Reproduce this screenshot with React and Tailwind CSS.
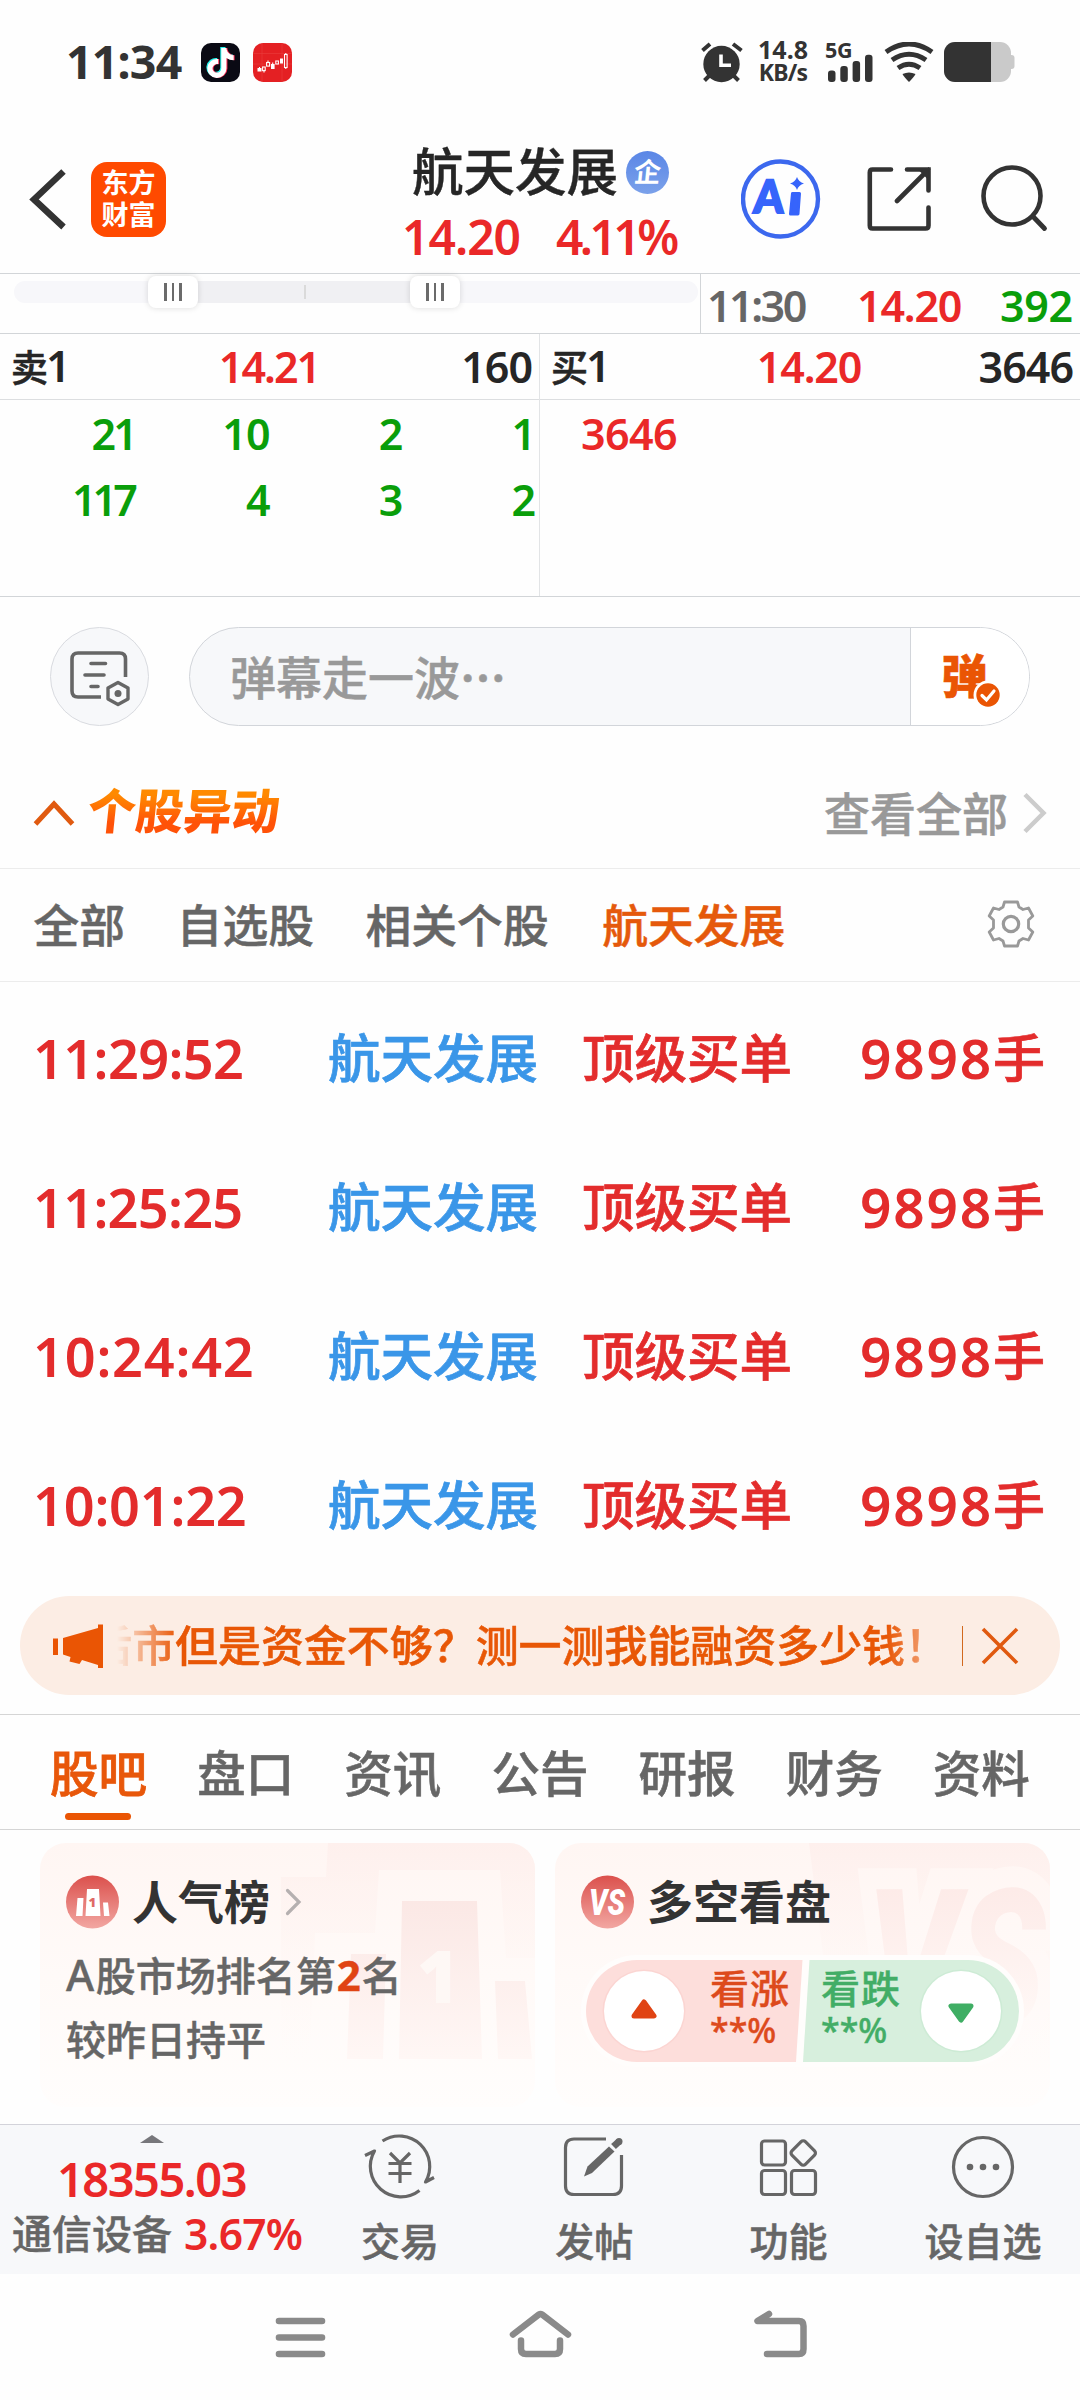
import React from "react";
import { FaTiktok } from "react-icons/fa6";

function StatusBar() {
  return (
    <div className="flex h-[124px] items-center text-[#333]">
      <div className="ml-[66px] -mt-[3px] w-[135px] text-[46.500px] leading-[48px] font-bold tracking-[-0.800px]">11:34</div>
      <div className="relative h-[39px] w-[39px] rounded-[10px] bg-[#0a0a14]">
        <FaTiktok className="absolute left-[5px] top-[4.500px] h-[30px] w-[27px] text-[#25f4ee]" />
        <FaTiktok className="absolute left-[7px] top-[5.500px] h-[30px] w-[27px] text-[#fe2c55]" />
        <FaTiktok className="absolute left-[6px] top-[5px] h-[30px] w-[27px] text-white" />
      </div>
      <svg className="ml-[13px]" width="39" height="39" viewBox="0 0 39 39">
        <rect width="39" height="39" rx="10" fill="#e42023" />
        <path d="M9 0V39M29 0V39M0 10.500H39M0 21H39" stroke="#ea3a3a" strokeWidth="0.700" />
        <g fill="white">
          <rect x="4.500" y="25" width="4" height="3.500" />
          <rect x="18" y="21" width="3.600" height="5" />
          <rect x="27" y="15.500" width="3" height="5" />
        </g>
        <g fill="none" stroke="white" strokeWidth="1.100">
          <rect x="9.600" y="24" width="2.600" height="3.600" />
          <rect x="13.600" y="19.500" width="3" height="3.600" />
          <rect x="22.800" y="18" width="2.600" height="3" />
          <rect x="31.500" y="11.500" width="2.600" height="13" />
          <path d="M6.500 24v1M11 27.500v2M15 17.500v2M19.700 19.500v1.500M32.800 10v1.500M32.800 24.500v1.500" />
        </g>
      </svg>
      <svg className="ml-[409px]" width="42" height="41" viewBox="0 0 42 41">
        <circle cx="20.500" cy="22" r="18.200" fill="#333" />
        <path d="M1.500 8.500L9 2M40.500 8.500L32 2M8 34l-4.500 4.500M33 34l4.500 4.500" stroke="#333" strokeWidth="4" fill="none" />
        <path d="M20 12.500V23.300H30" stroke="white" strokeWidth="3.600" fill="none" />
      </svg>
      <div className="ml-[15px] -mt-[2px] flex w-[50px] flex-col items-center font-bold">
        <span className="text-[25px] leading-[23px]">14.8</span>
        <span className="text-[23px] leading-[23px] tracking-[-0.800px]">KB/s</span>
      </div>
      <svg className="ml-[18px] overflow-visible" width="48" height="40" viewBox="0 0 48 40">
        <text x="-1" y="16" fontSize="21.500" fontWeight="700" fill="#333" letterSpacing="-0.300">5G</text>
        <g fill="#333">
          <rect x="2" y="28.500" width="7.500" height="11.500" rx="3" />
          <rect x="14.300" y="24" width="7.500" height="16" rx="3" />
          <rect x="26.600" y="19" width="7.500" height="21" rx="3" />
          <rect x="39" y="12.700" width="7.500" height="27.300" rx="3" />
        </g>
      </svg>
      <svg className="ml-[10px]" width="50" height="40" viewBox="0 0 50 40">
        <path d="M2 10Q25-6 48 10M8 18Q25 6.500 42 18M14 26Q25 18.500 36 26" fill="none" stroke="#333" strokeWidth="5" />
        <path d="M18.500 32Q25 28.800 31.500 32Q30 35 25 40Q20 35 18.500 32Z" fill="#333" />
      </svg>
      <svg className="ml-[10px]" width="71" height="40" viewBox="0 0 71 40">
        <rect width="67" height="40" rx="11" fill="#cacaca" />
        <rect x="64" y="13" width="6.500" height="14" rx="3" fill="#cacaca" />
        <path d="M47 0H11a11 11 0 0 0-11 11V29a11 11 0 0 0 11 11H47Z" fill="#333" />
      </svg>
    </div>
  );
}

function Header() {
  return (
    <div className="flex h-[149px] items-start">
      <svg className="ml-[29px] mt-[44px]" width="39" height="62" viewBox="0 0 39 62">
        <path d="M34.500 3.500L5 31.500L34.500 59" fill="none" stroke="#333" strokeWidth="6.500" />
      </svg>
      <div className="ml-[23px] mt-[38px] flex h-[75px] w-[75px] flex-col items-center justify-center rounded-[16px] bg-[#ff4a00] pb-[2px] text-[27px] leading-[32px] font-bold text-white">
        <span>东方</span>
        <span>财富</span>
      </div>
      <div className="ml-[226px] flex w-[346px] flex-col pl-[20px]">
        <div className="mt-[18px] flex h-[58px] items-center">
          <span className="w-[214px] text-[51.500px] leading-[58px] font-medium text-[#262626] [-webkit-text-stroke:0.4px]">航天发展</span>
          <span className="mt-[2px] flex h-[43px] w-[43px] items-center justify-center rounded-full bg-linear-to-b from-[#5a86e6] to-[#7ba1ea] text-[27px] leading-[30px] font-bold text-white">
            <span className="inline-block -skew-x-6">企</span>
          </span>
        </div>
        <div className="-ml-[10px] mt-[12px] flex text-[48px] leading-[50px] font-semibold text-[#ea2828]">
          <span className="w-[154px] tracking-[-1px]">14.20</span>
          <span className="tracking-[-3.600px]">4.11%</span>
        </div>
      </div>
      <svg className="ml-[3px] mt-[33px]" width="80" height="84" viewBox="0 0 80 84">
        <circle cx="39.500" cy="42" r="37.500" fill="none" stroke="#3c68ee" strokeWidth="4.400" />
        <text x="13" y="56" fontSize="46" fontWeight="900" fill="#3664fb" stroke="#3664fb" strokeWidth="2" fontFamily="Lato" textLength="30" lengthAdjust="spacingAndGlyphs" transform="skewX(-3) translate(2 0)">A</text>
        <path d="M51.500 36.500h7l-1.500 20.500h-7.500z" fill="#3664fb" stroke="#3664fb" strokeWidth="3" strokeLinejoin="round" />
        <path d="M56 20q1.500 4.700 7 6.500q-5.500 1.800-7 6.500q-1.500-4.700-7-6.500q5.500-1.800 7-6.500z" fill="#3664fb" />
      </svg>
      <svg className="ml-[46px] mt-[43px]" width="66" height="66" viewBox="0 0 66 66">
        <path d="M24 2.500H5.500Q2.800 2.500 2.800 5.500V58.500Q2.800 61.500 5.500 61.500H58.500Q61.500 61.500 61.500 58.500V40.500M40 2.500H61.500V23.500M61.500 2.500L30 34" fill="none" stroke="#333" strokeWidth="4.600" strokeLinecap="round" />
        <path d="M51 2.500H61.500V13Z" fill="#333" />
      </svg>
      <svg className="ml-[47px] mt-[41px]" width="72" height="72" viewBox="0 0 72 72">
        <circle cx="32" cy="31" r="28.500" fill="none" stroke="#333" strokeWidth="4.600" />
        <path d="M53 51.500L64.500 63.500" stroke="#333" strokeWidth="4.800" strokeLinecap="round" />
      </svg>
    </div>
  );
}

function Handle({ className }) {
  return (
    <div className={"absolute top-[2px] flex h-[32px] w-[50px] items-center justify-center gap-[5px] rounded-[8px] bg-white shadow-[0_0_6px_rgba(0,0,0,0.14)] " + className}>
      <i className="h-[18px] w-[2.500px] bg-[#6b6b6b]" />
      <i className="h-[18px] w-[2.500px] bg-[#6b6b6b]" />
      <i className="h-[18px] w-[2.500px] bg-[#6b6b6b]" />
    </div>
  );
}

function SliderRow() {
  return (
    <div className="flex h-[61px] border-y border-[#d2d5d8] text-[43px] leading-[54px] font-semibold">
      <div className="relative w-[700px]">
        <div className="mt-[7px] ml-[14px] flex h-[22px] w-[684px] items-center overflow-hidden rounded-full bg-[#f7f7fa]">
          <div className="ml-[158px] flex h-full w-[265px] items-center justify-center bg-[#f0f0f3]">
            <i className="h-[14px] w-[2px] bg-[#dadada]" />
          </div>
        </div>
        <Handle className="left-[148px]" />
        <Handle className="left-[410px]" />
      </div>
      <div className="flex flex-1 items-center border-l border-[#d2d5d8] pt-[5px]">
        <span className="ml-[6px] w-[150px] tracking-[-2.500px] text-[#666]">11:30</span>
        <span className="w-[143px] tracking-[-1.200px] text-[#ea2828]">14.20</span>
        <span className="tracking-[-0.400px] text-[#0a9e0a]">392</span>
      </div>
    </div>
  );
}

function OrderHalf({ label, price, volume, children, border }) {
  return (
    <div className={"flex h-[262px] w-[540px] flex-col text-[43px] font-semibold " + border}>
      <div className="flex h-[66px] items-center border-b border-[#dcdee0] leading-[64px]">
        <span className="ml-[11px] w-[160px] text-[#262626]">
          <span className="text-[37px] font-medium [-webkit-text-stroke:0.6px]">{label}</span>
          <span className="-ml-[2px]">1</span>
        </span>
        <span className="w-[196px] text-center text-[#ea2828]">{price}</span>
        <span className="mr-[7px] flex-1 text-right tracking-[-1px] text-[#262626]">{volume}</span>
      </div>
      {children}
    </div>
  );
}

function OrderBook() {
  const cells = ["21", "10", "2", "1", "117", "4", "3", "2"];
  return (
    <div className="flex h-[263px] border-b border-[#d2d5d8]">
      <OrderHalf label="卖" price={<span className="tracking-[-2px]">14.21</span>} volume="160" border="border-r border-[#e2e4e6]">
        <div className="mt-px grid w-[535px] grid-cols-4 pl-[4px] text-right leading-[66px] tracking-[-1px] text-[#0a9e0a]">
          {cells.map((c, i) => {
            if (c === "117") return <span key={i} className="pr-[3px] tracking-[-4px]">{c}</span>;
            if (c === "21") return <span key={i} className="pr-[2px] tracking-[-3px]">{c}</span>;
            return <span key={i}>{c}</span>;
          })}
        </div>
      </OrderHalf>
      <OrderHalf label="买" price={<span className="tracking-[-1.200px]">14.20</span>} volume="3646" border="">
        <div className="mt-px w-[137px] text-right leading-[66px] tracking-[-0.600px] text-[#ea2828]">3646</div>
      </OrderHalf>
    </div>
  );
}

function DanmuBar() {
  return (
    <div className="flex h-[130px] pt-[30px]">
      <div className="ml-[50px] flex h-[99px] w-[99px] items-center justify-center rounded-full border-[1.500px] border-[#d9dbe0] bg-[#f7f8fa]">
        <svg width="64" height="60" viewBox="0 0 64 60">
          <path d="M57.500 30V12Q57.500 6 51.500 6H10Q4 6 4 12V44Q4 50 10 50H33" fill="none" stroke="#666" strokeWidth="3.600" />
          <path d="M23 16.500H37.500M17 28H36M23 39.500H30" stroke="#666" strokeWidth="3.600" strokeLinecap="round" />
          <path d="M50 35.500L60 41V52L50 57.500L40 52V41Z" fill="none" stroke="#666" strokeWidth="3.400" strokeLinejoin="round" />
          <circle cx="50" cy="46.500" r="3.500" fill="#666" />
        </svg>
      </div>
      <div className="ml-[40px] flex h-[99px] w-[841px] overflow-hidden rounded-full border border-[#d2d5da] bg-[#f7f8fa]">
        <div className="w-[722px] pt-px pl-[40px] text-[46px] leading-[97px] font-medium text-[#999] [-webkit-text-stroke:0.5px]">
          弹幕走一波<span className="font-['Noto_Sans_CJK_SC'] leading-none font-bold">⋯</span>
        </div>
        <div className="flex-1 border-l border-[#d2d5da] bg-white">
          <svg width="118" height="97" viewBox="0 0 118 97">
            <text x="30.500" y="65" fontSize="46" fontWeight="900" fill="#ea5504" stroke="#ea5504" strokeWidth="0.600" textLength="46" lengthAdjust="spacingAndGlyphs">弹</text>
            <circle cx="77" cy="67" r="14.500" fill="white" />
            <circle cx="77" cy="67" r="11.700" fill="#ea5504" />
            <path d="M71 67.500l4.500 4.500l7.500-9" fill="none" stroke="white" strokeWidth="3.200" strokeLinecap="round" />
          </svg>
        </div>
      </div>
    </div>
  );
}

function SectionTitle() {
  return (
    <div className="flex h-[142px] items-center border-b border-[#ececec] pt-[30px]">
      <svg className="ml-[32px]" width="45" height="28" viewBox="0 0 45 28">
        <path d="M3.500 25L22 5L40.500 25" fill="none" stroke="#e05a10" strokeWidth="5" />
      </svg>
      <div className="-mt-[4px] ml-[11px] w-[203px] -skew-x-6 bg-linear-to-b from-[#ff8a00] from-20% to-[#ff5208] to-70% bg-clip-text text-[48px] leading-[56px] font-black text-transparent">个股异动</div>
      <div className="ml-[533px] w-[197px] text-[46px] leading-[56px] font-medium text-[#999] [-webkit-text-stroke:0.5px]">查看全部</div>
      <svg width="28" height="42" viewBox="0 0 28 42">
        <path d="M4 2.500L22.500 21L4 39.500" fill="none" stroke="#ccc" strokeWidth="4.500" />
      </svg>
    </div>
  );
}

function FilterTabs() {
  return (
    <div className="flex h-[113px] items-center gap-[51.500px] border-b border-[#ececec] pl-[33.500px] text-[45.800px] leading-[60px] font-medium text-[#666] [-webkit-text-stroke:0.5px]">
      <span>全部</span>
      <span>自选股</span>
      <span>相关个股</span>
      <span className="ml-[2px] text-[#e5590b]">航天发展</span>
      <svg className="-mt-[3px] ml-[150px]" width="48" height="50" viewBox="-24 -25 48 50">
        <path d="M-6.500-22H6.500L8-17L12-14.500L17.500-16L21.800-8L17.500-4V4L21.800 8L17.500 16L12 14.500L8 17L6.500 22H-6.500L-8 17L-12 14.500L-17.500 16L-21.800 8L-17.500 4V-4L-21.800-8L-17.500-16L-12-14.500L-8-17Z" fill="none" stroke="#999" strokeWidth="2.800" strokeLinejoin="round" />
        <circle r="7.700" fill="none" stroke="#999" strokeWidth="3.200" />
      </svg>
    </div>
  );
}

const moves = [
  ["11:29:52", "tracking-[-0.6px]"],
  ["11:25:25", "tracking-[-0.7px]"],
  ["10:24:42", "tracking-[0.8px]"],
  ["10:01:22", "tracking-[-0.2px]"],
];

function MoveList() {
  return (
    <div className="h-[614px] pt-px">
      {moves.map(([time, tracking]) => (
        <div key={time} className="flex h-[149px] items-center text-[52px] leading-[60px] font-medium text-[#e32c2c] [-webkit-text-stroke:0.7px]">
          <span className={"ml-[33px] w-[295px] text-[54px] font-semibold [-webkit-text-stroke:0px] " + tracking}>{time}</span>
          <span className="w-[254px] text-[52.500px] text-[#3a96e8]">航天发展</span>
          <span className="w-[278px] text-[52.500px]">顶级买单</span>
          <span className="flex"><span className="text-[55px] font-semibold tracking-[1.800px] [-webkit-text-stroke:0px]">9898</span>手</span>
        </div>
      ))}
    </div>
  );
}

function Banner() {
  return (
    <div className="h-[118px]">
      <div className="ml-[20px] flex h-[99px] w-[1040px] items-center rounded-full bg-[#fcede4] text-[#e85706]">
        <svg className="ml-[32px]" width="52" height="46" viewBox="0 0 52 46">
          <path d="M1 15.500H6V32H1ZM11 15L46 5V1.500H51V45H46V42L30 37L27.500 41L17.500 38.500L18.500 34L11 31.500Z" fill="#ea5504" />
        </svg>
        <div className="ml-[13px] flex w-[831px] shrink-0 justify-end overflow-hidden text-[42.950px] leading-[60px] font-medium whitespace-nowrap [mask-image:linear-gradient(to_right,transparent,black_60px,black_770px,transparent_850px)] [-webkit-text-stroke:0.5px]">后市但是资金不够？测一测我能融资多少钱！</div>
        <i className="ml-[14px] h-[40px] w-px bg-[#d2691e]" />
        <svg className="ml-[18px]" width="38" height="38" viewBox="0 0 38 38">
          <path d="M2 2L36 36M36 2L2 36" stroke="#e05a10" strokeWidth="3.600" />
        </svg>
      </div>
    </div>
  );
}

function MainTabs() {
  const tabs = ["盘口", "资讯", "公告", "研报", "财务", "资料"];
  return (
    <div className="flex h-[116px] border-y border-[#d5d5d5] pl-[50px] text-[48.500px] leading-[62px] font-medium text-[#666]">
      <div className="flex w-[147.500px] flex-col pt-[27px] text-[#e8570a] [-webkit-text-stroke:0.8px]">
        股吧
        <i className="mt-[9px] ml-[15px] h-[7px] w-[66px] rounded-full bg-[#ea5504]" />
      </div>
      {tabs.map((t) => (
        <div key={t} className="w-[147.500px] pt-[27px] [-webkit-text-stroke:0.5px]">{t}</div>
      ))}
    </div>
  );
}

function PopularityCard() {
  return (
    <div className="relative h-[264px] w-[495px] overflow-hidden rounded-[26px] bg-linear-to-b from-[#fff6f3] via-[#fffaf8] to-[#fffdfc]">
      <svg className="absolute inset-0" width="495" height="264" viewBox="0 0 495 264">
        <defs>
          <linearGradient id="halo" x1="0" y1="0" x2="0" y2="1">
            <stop offset="0" stopColor="#fef0ed" />
            <stop offset="1" stopColor="#fffaf8" stopOpacity="0" />
          </linearGradient>
          <linearGradient id="podium" x1="0" y1="58" x2="0" y2="216" gradientUnits="userSpaceOnUse">
            <stop offset="0" stopColor="#fbe8e5" />
            <stop offset="1" stopColor="#fff7f5" />
          </linearGradient>
        </defs>
        <path d="M241 34H286L288 0H495V115H466L460 27H339L335 90H275L270 216H241Z" fill="url(#halo)" />
        <path d="M311 111H346L343 216H307ZM362 58H437L442 216H359ZM455 138H485L492 216H458Z" fill="url(#podium)" />
        <text x="377" y="160" fontSize="72" fontWeight="900" fill="#fef8f5">1</text>
      </svg>
      <div className="relative flex flex-col pt-[32px] pl-[26px]">
        <div className="flex h-[54px] items-center">
          <svg width="54" height="54" viewBox="0 0 54 54">
            <defs>
              <linearGradient id="red" x1="0" y1="0" x2="0" y2="1">
                <stop offset="0" stopColor="#db504c" />
                <stop offset="1" stopColor="#f2a7a2" />
              </linearGradient>
            </defs>
            <circle cx="26.500" cy="27" r="26.500" fill="url(#red)" />
            <path d="M11.500 23H17.500L16.500 41H10ZM21 14H33L34.500 41H19.500ZM37 27.500H42L43.500 41H38Z" fill="white" />
            <text x="22.500" y="32" fontSize="13" fontWeight="900" fill="#e06a66">1</text>
          </svg>
          <span className="-mt-[3px] ml-[12px] w-[153px] text-[46px] leading-[54px] font-bold text-[#333]">人气榜</span>
          <svg width="18" height="30" viewBox="0 0 18 30">
            <path d="M2.500 3.500L14 15L2.500 26.500" fill="none" stroke="#b5b0b0" strokeWidth="3.200" strokeLinecap="round" />
          </svg>
        </div>
        <div className="mt-[17px] text-[40px] leading-[60px] font-medium text-[#666] [-webkit-text-stroke:0.4px]">
          <span className="text-[43px] leading-none tracking-[1.500px]">A</span>股市场排名第<b className="mx-px text-[42px] leading-none text-[#e04414]">2</b>名
        </div>
        <div className="mt-[4px] text-[40px] leading-[60px] font-medium text-[#666] [-webkit-text-stroke:0.4px]">较昨日持平</div>
      </div>
    </div>
  );
}

function VoteCard() {
  return (
    <div className="relative h-[264px] w-[495px] overflow-hidden rounded-[26px] bg-linear-to-b from-[#fff6f3] via-[#fffaf8] to-[#fffdfc]">
      <svg className="absolute inset-0 overflow-visible" width="495" height="264" viewBox="0 0 495 264">
        <defs>
          <linearGradient id="vsFill" x1="0" y1="46" x2="0" y2="180" gradientUnits="userSpaceOnUse">
            <stop offset="0" stopColor="#fdebe8" />
            <stop offset="1" stopColor="#fff8f6" />
          </linearGradient>
          <linearGradient id="vsEdge" x1="0" y1="0" x2="0" y2="200" gradientUnits="userSpaceOnUse">
            <stop offset="0" stopColor="#fff6f3" />
            <stop offset="1" stopColor="#fffbfa" />
          </linearGradient>
        </defs>
        <path d="M254 0H495V216H281Z" fill="url(#halo)" />
        <text x="312" y="182" fontFamily="Roboto" fontWeight="900" fontStyle="italic" fontSize="190" fill="url(#vsFill)" stroke="url(#vsEdge)" strokeWidth="42" paintOrder="stroke" textLength="178" lengthAdjust="spacingAndGlyphs">VS</text>
      </svg>
      <div className="relative pt-[32px] pl-[26px]">
        <div className="flex h-[54px] items-center">
          <svg width="54" height="54" viewBox="0 0 54 54">
            <circle cx="26.500" cy="27" r="26.500" fill="url(#red)" />
            <text x="8" y="40" fontSize="36" fontWeight="900" fontStyle="italic" fontFamily="Roboto" fill="white" textLength="36" lengthAdjust="spacingAndGlyphs">VS</text>
          </svg>
          <span className="-mt-[3px] ml-[12px] text-[46px] leading-[54px] font-bold text-[#333]">多空看盘</span>
        </div>
        <div className="relative mt-[26px] h-[112px] w-[443px]">
          <svg className="absolute inset-0" width="443" height="112" viewBox="0 0 443 112">
            <rect width="443" height="112" rx="56" fill="#fffdfc" />
            <path d="M56 5H221.500L215 107H56A51 51 0 0 1 56 5Z" fill="#fddedb" />
            <path d="M228.500 5H387A51 51 0 0 1 387 107H222Z" fill="#d7efdd" />
            <circle cx="63" cy="56" r="41.500" fill="#fbd5d2" />
            <circle cx="63" cy="56" r="40" fill="white" />
            <circle cx="380" cy="56" r="41.500" fill="#cdebd5" />
            <circle cx="380" cy="56" r="40" fill="white" />
            <path d="M63 47L73 61H53Z" fill="#e04414" stroke="#e04414" strokeWidth="5" strokeLinejoin="round" />
            <path d="M380 65L370 51H390Z" fill="#3fae64" stroke="#3fae64" strokeWidth="5" strokeLinejoin="round" />
          </svg>
          <div className="relative flex pt-[11px] text-[39px] leading-[43px] font-medium [-webkit-text-stroke:0.4px]">
            <div className="ml-[129px] flex w-[111px] flex-col text-[#dd4a1c]">
              <span className="tracking-[1px]">看涨</span>
              <span className="text-[34px]">**%</span>
            </div>
            <div className="flex flex-col text-[#42ad66]">
              <span className="tracking-[1px]">看跌</span>
              <span className="text-[34px]">**%</span>
            </div>
          </div>
        </div>
      </div>
    </div>
  );
}

function Action({ label, children }) {
  return (
    <div className="flex w-[194.300px] flex-col items-center pt-[7px] text-[39px] leading-[56px] font-medium text-[#666] [-webkit-text-stroke:0.5px]">
      <svg width="74" height="70" viewBox="-37 -35 74 70" fill="none" stroke="#666" strokeWidth="3.200">{children}</svg>
      <span className="mt-[11px]">{label}</span>
    </div>
  );
}

function BottomBar() {
  return (
    <div className="flex h-[150px] border-t border-[#d3d3da] bg-[#f7f8fa]">
      <div className="flex w-[303px] flex-col items-center">
        <svg className="mt-[10px] ml-px" width="24" height="8" viewBox="0 0 24 8">
          <path d="M0 8L12 0L24 8Z" fill="#77777b" />
        </svg>
        <span className="mt-[9px] text-[47px] leading-[54px] font-semibold tracking-[-1.500px] text-[#ea2828]">18355.03</span>
        <div className="flex w-full items-center pl-[12px] leading-[56px] font-medium">
          <span className="w-[172px] text-[40px] text-[#666] [-webkit-text-stroke:0.4px]">通信设备</span>
          <span className="text-[42.500px] font-semibold tracking-[-0.700px] text-[#ea2828]">3.67%</span>
        </div>
      </div>
      <Action label="交易">
        <path d="M-17.500-26A30.500 30.500 0 0 1 25.500 15L34 10.500M19.500 23.500A30.500 30.500 0 0 1-25.500-16L-35-11.500" strokeLinejoin="round" />
        <path d="M-10-14L0-4L10-14M0-4V16M-11.500-3.500H11.500M-11.500 6.500H11.500" />
      </Action>
      <Action label="发帖">
        <path d="M12-28H-20Q-28.500-28-28.500-19.500V19Q-28.500 27.500-20 27.500H19Q27.500 27.500 27.500 19V-12" />
        <path d="M-10 9.500L-6.500-0.500L15-20.500L20.500-15.500L-2 6Z" fill="#666" stroke="none" />
        <path d="M19.500-20.500L25-25.500" strokeWidth="7" />
        <circle cx="25" cy="-25.500" r="3.500" fill="#666" stroke="none" />
      </Action>
      <Action label="功能">
        <rect x="-27.500" y="-26" width="24" height="24" rx="3" />
        <rect x="-27.500" y="3.500" width="24" height="24" rx="3" />
        <rect x="2.500" y="3.500" width="24" height="24" rx="3" />
        <rect x="4.750" y="-23.500" width="19" height="19" rx="3" transform="rotate(45 14.250 -14)" />
      </Action>
      <Action label="设自选">
        <circle r="29.500" />
        <g fill="#666" stroke="none">
          <circle cx="-13" r="3.300" />
          <circle r="3.300" />
          <circle cx="13" r="3.300" />
        </g>
      </Action>
    </div>
  );
}

function SystemNav() {
  return (
    <div className="flex h-[126px] items-start pt-[34px]">
      <svg className="ml-[275px]" width="51" height="54" viewBox="0 0 51 54">
        <path d="M4 13H47M4 29.500H47M4 46H47" stroke="#8a8a8a" strokeWidth="6.600" strokeLinecap="round" />
      </svg>
      <svg className="ml-[182px]" width="66" height="54" viewBox="0 0 66 54">
        <path d="M5 26.500L31 6.500Q32.500 5.500 34 6.500L60 26.500M13 32.500V41Q13 46 18 46H47Q52 46 52 41V32.500" fill="none" stroke="#8a8a8a" strokeWidth="6.500" strokeLinecap="round" />
      </svg>
      <svg className="ml-[179px]" width="56" height="54" viewBox="0 0 56 54">
        <path d="M16 6L4.500 13H46Q50.500 13 50.500 18V41Q50.500 46 46 46H14" fill="none" stroke="#8a8a8a" strokeWidth="6.500" strokeLinecap="round" strokeLinejoin="round" />
      </svg>
    </div>
  );
}

export default function App() {
  return (
    <div lang="zh-CN" className="flex h-[2400px] w-[1080px] flex-col overflow-hidden bg-[#fefefe] font-['Noto_Sans','Noto_Sans_CJK_SC',sans-serif] whitespace-nowrap">
      <StatusBar />
      <Header />
      <SliderRow />
      <OrderBook />
      <DanmuBar />
      <SectionTitle />
      <FilterTabs />
      <MoveList />
      <Banner />
      <MainTabs />
      <div className="flex h-[294px] gap-[20px] pt-[13px] pl-[40px]">
        <PopularityCard />
        <VoteCard />
      </div>
      <BottomBar />
      <SystemNav />
    </div>
  );
}
